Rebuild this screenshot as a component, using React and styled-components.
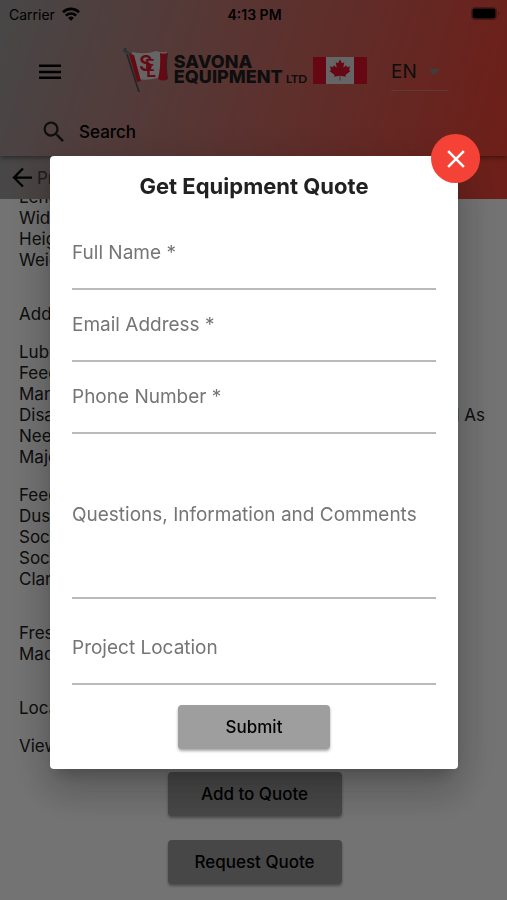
import React, { useState } from "react";
import styled, { createGlobalStyle } from "styled-components";

const GlobalStyle = createGlobalStyle`
  * {
    box-sizing: border-box;
  }
  body {
    margin: 0;
    background: #fff;
    color: #212121;
    font-family: Inter, "Liberation Sans", sans-serif;
  }
  button, input, textarea, select {
    font-family: inherit;
  }
`;

// Page behind the dialog
const StyledPage = styled.div`
  display: flex;
  flex-direction: column;
  height: 100vh;
  overflow: hidden;
`;
const StyledHeader = styled.header`
  position: relative;
  z-index: 1;
  padding-bottom: 8px;
  background: linear-gradient(107deg, #9e9e9e, #f44336);
  box-shadow: 0 2px 5px rgba(0, 0, 0, 0.4);
`;
const StyledStatusBar = styled.div`
  display: grid;
  grid-template-columns: 1fr auto 1fr;
  align-items: center;
  height: 28px;
  padding: 0 7px 0 9px;
  color: #000;
  font-size: 14px;
`;
const StyledCarrier = styled.span`
  display: flex;
  align-items: center;
  gap: 7px;
`;
const StyledClock = styled.span`
  font-weight: 600;
`;
const StyledBattery = styled.span`
  display: flex;
  justify-content: flex-end;
`;
const StyledToolbar = styled.div`
  display: flex;
  align-items: center;
  justify-content: space-between;
  height: 88px;
  padding: 0 59px 0 38px;
`;
const StyledIconButton = styled.button`
  display: flex;
  padding: 0;
  border: 0;
  background: none;
  color: #000;
  cursor: pointer;
`;
const StyledBrand = styled.div`
  display: flex;
  align-items: center;
  margin-left: 36px;
  padding-bottom: 4px;
`;
const StyledBrandName = styled.div`
  margin: 0 6px 0 4px;
  color: #212121;
  font-size: 18px;
  font-weight: 800;
  line-height: 15px;
`;
const StyledBrandSuffix = styled.span`
  margin-left: 3px;
  font-family: Lato, Inter, sans-serif;
  font-size: 12px;
  font-weight: 700;
`;
const StyledLanguage = styled.label`
  display: flex;
  align-items: center;
  height: 38px;
  padding-right: 8px;
  border-bottom: 1px solid #bdbdbd66;
`;
const StyledSelect = styled.select`
  width: 37px;
  padding: 0;
  border: 0;
  appearance: none;
  background: none;
  color: #212121;
  font-size: 19px;
`;
const StyledSearch = styled.label`
  display: flex;
  align-items: center;
  gap: 11px;
  height: 32px;
  padding: 0 40px;
`;
const StyledSearchInput = styled.input`
  flex: 1;
  min-width: 0;
  padding: 0;
  border: 0;
  outline: 0;
  background: none;
  font-size: 17px;
  font-weight: 500;
  &::placeholder {
    color: #000;
    opacity: 1;
  }
`;
const StyledBackBar = styled.nav`
  flex: none;
  display: flex;
  align-items: center;
  gap: 1px;
  height: 43px;
  padding-left: 9px;
  background: linear-gradient(95deg, #9e9e9e, #f44336);
  color: #424242;
  font-size: 17px;
`;
// Kept at the end of the list
const StyledContent = styled.main`
  flex: 1;
  min-height: 0;
  display: flex;
  flex-direction: column;
  justify-content: flex-end;
  overflow: hidden;
  padding: 0 17px 16px 19px;
  font-size: 17px;
  line-height: 21px;
`;
const StyledParagraph = styled.p`
  margin: 0 0 ${(props) => (props.$last ? "33px" : "17px")};
  white-space: pre-line;
  &:last-of-type {
    margin-bottom: 15px;
  }
`;
const StyledActions = styled.div`
  display: flex;
  flex-direction: column;
  align-items: center;
  gap: 24px;
`;
const StyledButton = styled.button`
  width: ${(props) => (props.$wide ? "174px" : "152px")};
  height: 44px;
  padding: 0;
  border: 0;
  border-radius: 4px;
  background: #9e9e9e;
  box-shadow: 0 2px 3px rgba(0, 0, 0, 0.35);
  color: #000;
  font-size: 17px;
  font-weight: 500;
  cursor: pointer;
`;

// Dialog
const StyledBackdrop = styled.div`
  position: fixed;
  inset: 0;
  z-index: 2;
  display: flex;
  align-items: center;
  padding: 25px 49px 0 50px;
  background: rgba(0, 0, 0, 0.55);
`;
const StyledDialog = styled.div`
  position: relative;
  width: 100%;
  padding: 16px 22px 20px;
  border-radius: 4px;
  background: #fff;
  box-shadow: 0 11px 15px -7px rgba(0, 0, 0, 0.2), 0 24px 38px 3px rgba(0, 0, 0, 0.14), 0 9px 46px 8px rgba(0, 0, 0, 0.12);
`;
const StyledTitle = styled.h2`
  margin: 0 0 41px;
  font-size: 22px;
  font-weight: 700;
  line-height: 28px;
  text-align: center;
`;
const StyledClose = styled.button`
  position: absolute;
  top: -22px;
  right: -22px;
  display: flex;
  align-items: center;
  justify-content: center;
  width: 49px;
  height: 49px;
  padding: 0;
  border: 0;
  border-radius: 50%;
  background: #f44336;
  color: #fff;
  cursor: pointer;
`;
const StyledForm = styled.form`
  display: flex;
  flex-direction: column;
  align-items: center;
`;
const StyledField = styled.div`
  display: flex;
  flex-direction: column;
  width: 100%;
  padding-top: ${(props) => props.$space || "0"};
  margin-bottom: ${(props) => (props.$end ? "20px" : "23px")};
`;
const StyledLabel = styled.label`
  color: #757575;
  font-size: 19px;
  line-height: 24px;
`;
const StyledInput = styled.input`
  height: 25px;
  padding: 0;
  border: 0;
  border-bottom: 2px solid #bababa;
  border-radius: 0;
  outline: 0;
  background: none;
  font-size: 19px;
`;
const StyledTextarea = styled(StyledInput)`
  height: 72px;
  resize: none;
`;

const paragraphs = [
  { text: "Length: 42'\nWidth: 10'\nHeight: 13'\nWeight: 24 t", last: true },
  { text: "Additional Information:" },
  {
    text: "Lubrication System\nFeed Hopper\nManual Controls\nDisassembled And Cleaned, Every Worn Part Replaced As\nNeeded\nMajor Service",
  },
  { text: "Feeder\nDust Cover\nSocket Liner\nSocket\nClamps", last: true },
  { text: "Fresh Paint\nMade In Canada", last: true },
  { text: "Location: Canada" },
  { text: "View Video" },
];

function WifiIcon() {
  return (
    <svg width="18" height="14" viewBox="0 0 18 14" fill="none" stroke="#000" strokeWidth="2.6">
      <path d="M1 5.2a11.4 11.4 0 0 1 16 0" />
      <path d="M3.9 8.6a7.3 7.3 0 0 1 10.2 0" />
      <path d="M9 13.8 6.100 10.900a4.100 4.100 0 0 1 5.800 0z" fill="#000" stroke="none" />
    </svg>
  );
}

function BatteryIcon() {
  return (
    <svg width="29" height="14" viewBox="0 0 29 14">
      <rect x="0.5" y="0.5" width="25" height="12" rx="3" fill="none" stroke="#000" strokeOpacity="0.3" />
      <rect x="1.500" y="1.500" width="23" height="10" rx="2" fill="#000" />
      <path d="M27 4.500v4q2-2 0-4z" fill="#000" fillOpacity="0.4" />
    </svg>
  );
}

function MaterialIcon({ d, size = 24 }) {
  return (
    <svg width={size} height={size} viewBox="0 0 24 24" fill="currentColor" aria-hidden="true">
      <path d={d} />
    </svg>
  );
}

function BannerLogo() {
  return (
    <svg width="48" height="50" viewBox="0 0 48 50">
      <path d="M10 7q14 3 24-1 6 2 11 1-2 13 0 27-6 1-10-1-10 3-20 1z" fill="#e0e0e0" />
      <path d="M7 9l5 1 7 26-4 1z" fill="#e0182d" />
      <path d="M38 8q4 1 8 0-2 13 0 26-5 3-10 0 3-12 2-26z" fill="#e0182d" />
      <path d="M45 8q-2 13 0 26" fill="none" stroke="#555" />
      <g fill="#e0182d" fontFamily="Inter, sans-serif" fontWeight="600">
        <text x="17" y="26" fontSize="21">S</text>
        <text x="23" y="26" fontSize="16">E</text>
        <text x="24" y="32" fontSize="18">L</text>
      </g>
      <path d="M3 3l14 44" stroke="#455a57" strokeWidth="1.800" />
      <circle cx="4" cy="7" r="2.500" fill="#78908c" />
      <path d="M1 5l8 4" stroke="#455a57" />
    </svg>
  );
}

function CanadaFlag() {
  return (
    <svg width="54" height="27" viewBox="0 0 54 27" role="img" aria-label="Canada">
      <path fill="#e0e0e0" d="M13 0h28v27H13z" />
      <path fill="#e0122a" d="M0 0h13v27H0zM41 0h13v27H41z" />
      <path
        fill="#e0122a"
        d="M27 2.500l-2 3.800-2.300-1 1 5.500-2.700-2.600-1 1.800-3-.5 1 3.500-1.500 1 5 4-.5 1.700 5.700-1-.1 4.800h.8l-.1-4.800 5.700 1-.5-1.700 5-4-1.500-1 1-3.500-3 .5-1-1.800-2.700 2.600 1-5.500-2.300 1z"
      />
    </svg>
  );
}

function Field({ id, label, space, end, multiline }) {
  return (
    <StyledField $space={space} $end={end}>
      <StyledLabel htmlFor={id}>{label}</StyledLabel>
      {multiline ? <StyledTextarea as="textarea" id={id} /> : <StyledInput id={id} type="text" />}
    </StyledField>
  );
}

function QuoteDialog({ onClose }) {
  return (
    <StyledBackdrop>
      <StyledDialog role="dialog" aria-modal="true" aria-labelledby="quote-title">
        <StyledTitle id="quote-title">Get Equipment Quote</StyledTitle>
        <StyledForm onSubmit={(e) => e.preventDefault()}>
          <Field id="name" label="Full Name *" />
          <Field id="email" label="Email Address *" />
          <Field id="phone" label="Phone Number *" />
          <Field id="comments" label="Questions, Information and Comments" space="46px" multiline />
          <Field id="location" label="Project Location" space="14px" end />
          <StyledButton type="submit">Submit</StyledButton>
        </StyledForm>
        <StyledClose type="button" aria-label="Close" onClick={onClose}>
          <MaterialIcon size={30} d="M19 6.410 17.590 5 12 10.590 6.410 5 5 6.410 10.590 12 5 17.590 6.410 19 12 13.410 17.590 19 19 17.590 13.410 12z" />
        </StyledClose>
      </StyledDialog>
    </StyledBackdrop>
  );
}

function App() {
  const [open, setOpen] = useState(true);
  return (
    <>
      <GlobalStyle />
      <StyledPage>
        <StyledHeader>
          <StyledStatusBar>
            <StyledCarrier>
              Carrier <WifiIcon />
            </StyledCarrier>
            <StyledClock>4:13 PM</StyledClock>
            <StyledBattery>
              <BatteryIcon />
            </StyledBattery>
          </StyledStatusBar>
          <StyledToolbar>
            <StyledIconButton type="button" aria-label="Menu">
              <MaterialIcon d="M1 19h22v-2.500H1zM1 13.200h22v-2.500H1zM1 4.500V7h22V4.500z" />
            </StyledIconButton>
            <StyledBrand>
              <BannerLogo />
              <StyledBrandName>
                SAVONA
                <br />
                EQUIPMENT<StyledBrandSuffix>LTD</StyledBrandSuffix>
              </StyledBrandName>
              <CanadaFlag />
            </StyledBrand>
            <StyledLanguage>
              <StyledSelect aria-label="Language" defaultValue="EN">
                <option>EN</option>
                <option>FR</option>
              </StyledSelect>
              <svg width="12" height="6" viewBox="0 0 12 6">
                <path d="M0 0h12L6 6z" fill="#8a8a8a" />
              </svg>
            </StyledLanguage>
          </StyledToolbar>
          <StyledSearch>
            <MaterialIcon
              size={28}
              d="M15.500 14h-.79l-.28-.27A6.470 6.470 0 0 0 16 9.500 6.500 6.500 0 1 0 9.500 16c1.610 0 3.090-.59 4.230-1.570l.27.28v.79l5 4.990L20.490 19zm-6 0C7.010 14 5 11.990 5 9.500S7.010 5 9.500 5 14 7.010 14 9.500 11.990 14 9.500 14z"
            />
            <StyledSearchInput type="search" aria-label="Search" placeholder="Search" />
          </StyledSearch>
        </StyledHeader>
        <StyledBackBar>
          <StyledIconButton type="button" aria-label="Back">
            <MaterialIcon size={27} d="M20.500 11H6.830l6.300-6.300L11.700 3.300 3 12l8.700 8.700 1.420-1.410L6.830 13H20.500z" />
          </StyledIconButton>
          Products
        </StyledBackBar>
        <StyledContent>
          {paragraphs.map((p) => (
            <StyledParagraph key={p.text} $last={p.last}>
              {p.text}
            </StyledParagraph>
          ))}
          <StyledActions>
            <StyledButton type="button" $wide>
              Add to Quote
            </StyledButton>
            <StyledButton type="button" $wide onClick={() => setOpen(true)}>
              Request Quote
            </StyledButton>
          </StyledActions>
        </StyledContent>
      </StyledPage>
      {open && <QuoteDialog onClose={() => setOpen(false)} />}
    </>
  );
}

export default App;
